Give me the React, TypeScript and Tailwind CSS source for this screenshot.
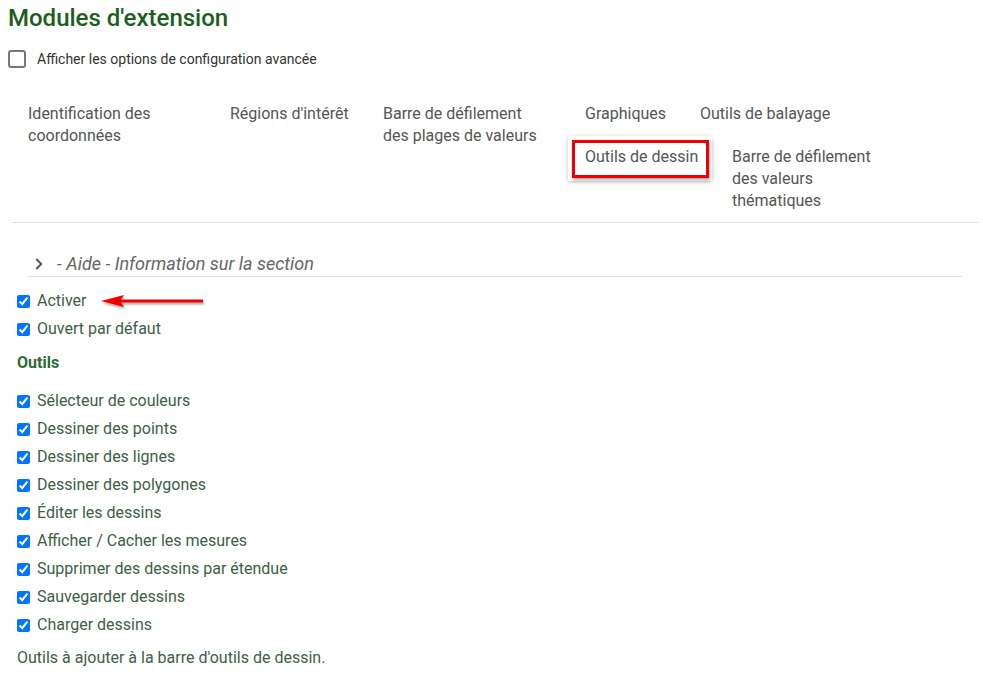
import { ChevronRight } from 'lucide-react'

const outils = [
  'Sélecteur de couleurs',
  'Dessiner des points',
  'Dessiner des lignes',
  'Dessiner des polygones',
  'Éditer les dessins',
  'Afficher / Cacher les mesures',
  'Supprimer des dessins par étendue',
  'Sauvegarder dessins',
  'Charger dessins',
]

function Check({ label }: { label: string }) {
  return (
    <label className="flex items-center h-[28px] text-[16px] text-[#3b6046]">
      <input type="checkbox" checked readOnly className="w-[13px] h-[13px] ml-[17px] mr-[7px] accent-[#0075ff]" />
      {label}
    </label>
  )
}

export default function App() {
  return (
    <div className="w-[983px] h-[682px] bg-white overflow-hidden font-['Roboto',sans-serif] relative">
      <h1 className="pl-[8px] pt-[2px] text-[24px] leading-[32px] font-medium text-[#1b5e20]">Modules d'extension</h1>

      {/* advanced options */}
      <div className="flex items-center pl-[8px] mt-[15px] h-[20px]">
        <div className="w-[18px] h-[18px] border-2 border-[#777] rounded-[3px]" />
        <span className="ml-[11px] text-[14px] text-[#333]">Afficher les options de configuration avancée</span>
      </div>

      {/* tabs */}
      <div className="mt-[24px] ml-[12px] mr-[5px] border-b border-[#dedede] text-[16px] leading-[22px] text-[#555]">
        <div className="flex h-[43px] pt-[10px] pl-[3px]">
          <div className="w-[202px] px-[13px] shrink-0">Identification des<br />coordonnées</div>
          <div className="w-[153px] px-[13px] shrink-0">Régions d'intérêt</div>
          <div className="w-[202px] px-[13px] shrink-0">Barre de défilement<br />des plages de valeurs</div>
          <div className="w-[115px] px-[13px] shrink-0">Graphiques</div>
          <div className="px-[13px]">Outils de balayage</div>
        </div>
        <div className="flex pl-[560px] pb-[10px]">
          <div className="relative w-[147px] shrink-0 pt-[10px]">
            <div className="absolute left-[-4px] top-0 w-[144px] h-[45px] bg-white shadow-[0_1px_4px_rgba(0,0,0,0.25)] rounded-[2px]" />
            <div className="absolute left-0 top-[4px] w-[137px] h-[38px] border-[3px] border-[#ee0000] shadow-[1px_2px_3px_rgba(0,0,0,0.35)]" />
            <div className="relative px-[13px]">Outils de dessin</div>
          </div>
          <div className="pt-[10px] px-[13px]">Barre de défilement<br />des valeurs<br />thématiques</div>
        </div>
      </div>

      {/* help */}
      <div className="ml-[27px] mr-[21px] mt-[29px] flex items-center h-[23px] border-b border-[#e0e0e0] pb-[1px] box-content">
        <ChevronRight className="w-[18px] h-[18px] text-[#555] ml-[3px]" strokeWidth={2.5} />
        <span className="ml-[9px] italic text-[18px] text-[#666]">- Aide - Information sur la section</span>
      </div>

      <div className="mt-[10px]">
        <Check label="Activer" />
        <Check label="Ouvert par défaut" />
      </div>
      <div className="pl-[17px] pt-[8px] text-[16px] leading-[24px] font-bold text-[#2e6b35]">Outils</div>
      <div className="mt-[12px]">
        {outils.map(o => <Check key={o} label={o} />)}
      </div>
      <p className="pl-[17px] mt-[7px] text-[16px] leading-[24px] text-[#3b6046]">Outils à ajouter à la barre d'outils de dessin.</p>

      {/* annotation arrow */}
      <svg className="absolute left-[98px] top-[291px]" width="112" height="22" viewBox="0 0 112 22">
        <defs>
          <filter id="sh" x="-10%" y="-50%" width="120%" height="200%">
            <feDropShadow dx="1" dy="2" stdDeviation="1.2" floodOpacity="0.35" />
          </filter>
        </defs>
        <g filter="url(#sh)">
          <line x1="22" y1="10" x2="105" y2="10" stroke="#e00" strokeWidth="3" />
          <polygon points="3,10 26,4 22,10 26,16" fill="#e00" />
        </g>
      </svg>
    </div>
  )
}
